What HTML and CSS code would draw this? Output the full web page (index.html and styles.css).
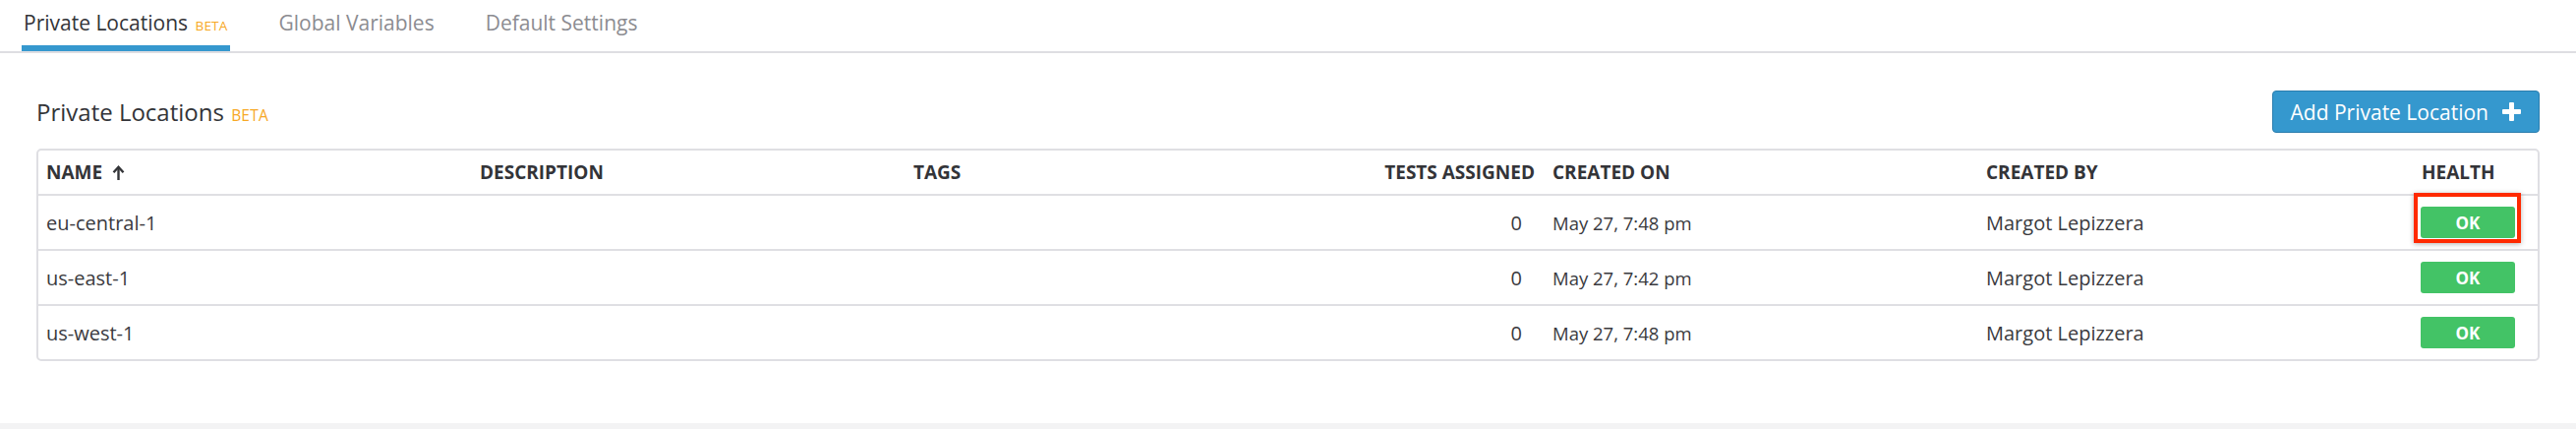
FILE: index.html
```html
<!DOCTYPE html>
<html lang="en">
<head>
<meta charset="utf-8">
<title>Private Locations</title>
<link rel="stylesheet" href="styles.css">
</head>
<body>
<div class="page">
  <nav class="tabs">
    <div class="tab active">Private Locations <span class="beta">BETA</span></div>
    <div class="tab">Global Variables</div>
    <div class="tab">Default Settings</div>
  </nav>

  <div class="header-row">
    <h1 class="title">Private Locations <span class="beta beta-lg">BETA</span></h1>
    <button class="btn-add">Add Private Location
      <svg class="plus" width="19" height="19" viewBox="0 0 19 19"><rect x="7" y="0" width="5" height="19" rx="1" fill="#fff"/><rect x="0" y="7" width="19" height="5" rx="1" fill="#fff"/></svg>
    </button>
  </div>

  <div class="table">
    <div class="row head">
      <div class="cell">NAME
        <svg class="sort" width="13" height="15" viewBox="0 0 13 15"><path d="M6.5 2.5V15" stroke="#333438" stroke-width="2.4" fill="none"/><path d="M1.5 7.2L6.5 1.8L11.5 7.2" stroke="#333438" stroke-width="2.4" fill="none" stroke-linejoin="miter"/></svg>
      </div>
      <div class="cell">DESCRIPTION</div>
      <div class="cell">TAGS</div>
      <div class="cell num">TESTS ASSIGNED</div>
      <div class="cell">CREATED ON</div>
      <div class="cell">CREATED BY</div>
      <div class="cell">HEALTH</div>
    </div>
    <div class="row">
      <div class="cell">eu-central-1</div>
      <div class="cell"></div>
      <div class="cell"></div>
      <div class="cell num">0</div>
      <div class="cell date">May 27, 7:48 pm</div>
      <div class="cell">Margot Lepizzera</div>
      <div class="cell health"><span class="ok">OK</span><span class="highlight"></span></div>
    </div>
    <div class="row">
      <div class="cell">us-east-1</div>
      <div class="cell"></div>
      <div class="cell"></div>
      <div class="cell num">0</div>
      <div class="cell date">May 27, 7:42 pm</div>
      <div class="cell">Margot Lepizzera</div>
      <div class="cell health"><span class="ok">OK</span></div>
    </div>
    <div class="row">
      <div class="cell">us-west-1</div>
      <div class="cell"></div>
      <div class="cell"></div>
      <div class="cell num">0</div>
      <div class="cell date">May 27, 7:48 pm</div>
      <div class="cell">Margot Lepizzera</div>
      <div class="cell health"><span class="ok">OK</span></div>
    </div>
  </div>
</div>
</body>
</html>
```
FILE: styles.css
```css
* { box-sizing: border-box; }

html, body {
  margin: 0;
  padding: 0;
  background: #f3f3f4;
  font-family: "Open Sans", "Noto Sans", sans-serif;
  color: #3a3a3e;
}

.page {
  background: #fff;
  height: 430px;
}

.tabs {
  display: flex;
  gap: 48px;
  padding-left: 22px;
  border-bottom: 2px solid #dedee2;
}

.tab {
  font-size: 21px;
  line-height: 29px;
  height: 52px;
  padding: 9px 2px 0;
  color: #8c8c91;
  border-bottom: 6px solid transparent;
  white-space: nowrap;
}

.tab.active {
  color: #333438;
  border-bottom-color: #3598ce;
}

.beta {
  font-size: 13.5px;
  line-height: 0;
  color: #f7a825;
  margin-left: 2px;
  letter-spacing: 0.2px;
}

.beta-lg {
  font-size: 15.5px;
  margin-left: 1px;
}

.header-row {
  display: flex;
  justify-content: space-between;
  align-items: center;
  height: 97px;
  padding: 38px 37px 16px;
}

.title {
  margin: 0;
  font-size: 24px;
  line-height: 32px;
  font-weight: 400;
  color: #333438;
}

.btn-add {
  display: flex;
  align-items: center;
  gap: 14px;
  height: 43px;
  padding: 0 18px;
  font-family: "Open Sans", "Noto Sans", sans-serif;
  font-size: 21px;
  color: #fff;
  background: #3598ce;
  border: 1px solid #2a7dae;
  border-radius: 4px;
}

.plus { display: block; }

.table {
  margin: 0 37px;
  border: 2px solid #dfdfe3;
  border-radius: 5px;
}

.row {
  display: grid;
  grid-template-columns: 441px 441px 441px 209px 441px 443px 1fr;
  height: 56px;
  border-bottom: 2px solid #dfdfe3;
  align-items: center;
}

.row:last-child {
  border-bottom: none;
  height: 54px;
}

.row.head {
  height: 46px;
}

.cell {
  padding: 0 10px 0 8px;
  font-size: 20px;
  white-space: nowrap;
  color: #3a3a3e;
}

.head .cell {
  font-size: 19px;
  font-weight: 700;
  color: #333438;
  display: flex;
  align-items: center;
}

.sort {
  margin-left: 10px;
  display: block;
}

.num {
  text-align: right;
  padding-right: 23px;
}

.head .num {
  justify-content: flex-end;
  padding-right: 10px;
}

.date {
  font-size: 18.5px;
}

.health {
  position: relative;
  height: 100%;
  display: flex;
  align-items: center;
  padding-left: 7px;
}

.ok {
  display: inline-flex;
  align-items: center;
  justify-content: center;
  width: 96px;
  height: 32px;
  background: #43c366;
  border-radius: 3px;
  color: #fff;
  font-weight: 700;
  font-size: 17px;
}

.highlight {
  position: absolute;
  left: 0;
  top: -3px;
  width: 109px;
  height: 51px;
  border: 4px solid #ff2a00;
  box-shadow: 0 1px 5px rgba(0, 0, 0, 0.3);
}
```
